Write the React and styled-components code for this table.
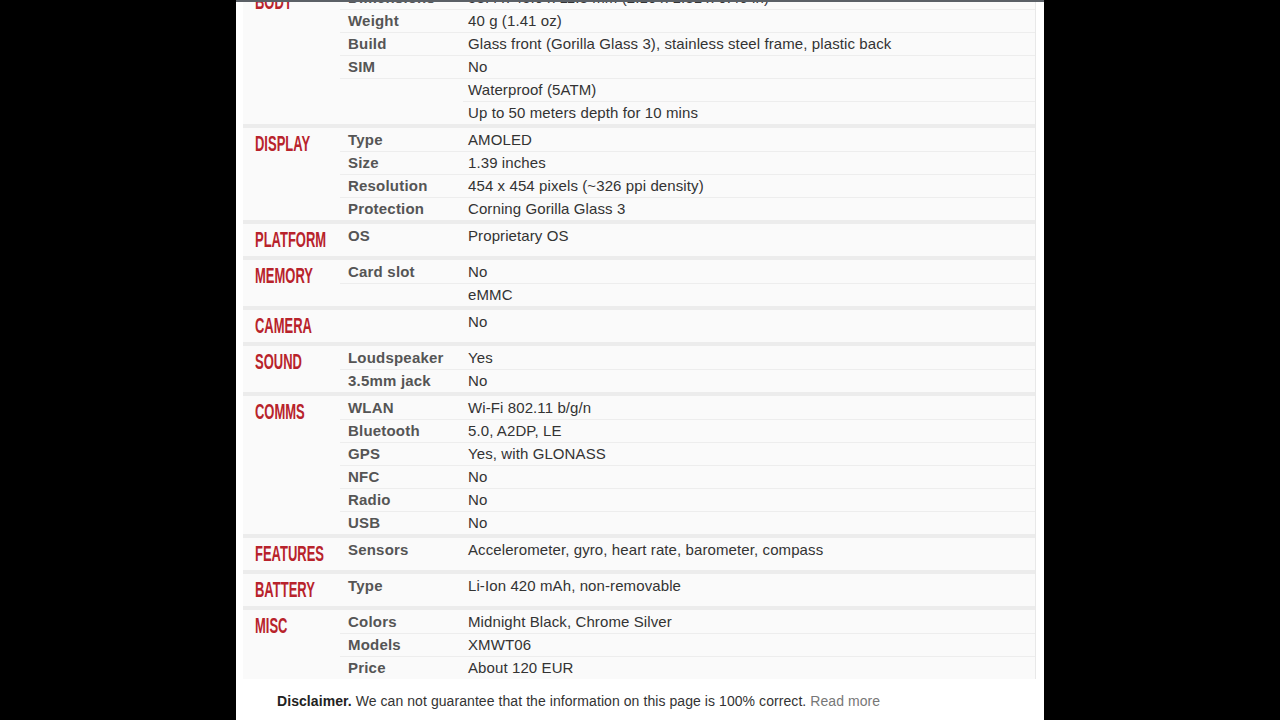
import React from "react";
import styled, { createGlobalStyle } from "styled-components";

const Global = createGlobalStyle`
  html, body {
    margin: 0;
    padding: 0;
    background: #000;
    height: 720px;
    overflow: hidden;
  }
  body {
    font-family: "Liberation Sans", Arial, sans-serif;
  }
`

const PAGE = styled.div`
  width: 808px;
  height: 720px;
  margin: 0 auto;
  background: #fff;
  overflow: hidden;
`
const TOPEDGE = styled.div`
  position: fixed;
  top: 0;
  left: 50%;
  width: 808px;
  margin-left: -404px;
  height: 2px;
  background: #5b6066;
  z-index: 2;
`
const TABLE = styled.div`
  margin: -14px 8px 0 7px;
  background: #fafafa;
  border-right: 1px solid #e8e8e8;
`
const SECTION = styled.div`
  display: flex;
  min-height: 32px;
  border-top: ${p => (p.first ? "none" : "4px solid #ececec")};
`
const HEADER = styled.div`
  width: 97px;
  flex-shrink: 0;
  padding-left: 12px;
  box-sizing: border-box;
  height: 32px;
  line-height: 32px;
  span {
    display: inline-block;
    font-family: "Liberation Sans", Arial, sans-serif;
    font-weight: bold;
    font-size: 22px;
    color: #b8232b;
    transform: scaleX(0.59);
    transform-origin: left center;
    white-space: nowrap;
  }
`
const ROWS = styled.div`
  flex: 1;
`
const ROW = styled.div`
  display: grid;
  grid-template-columns: 123px 1fr;
  height: 23px;
`
const LABEL = styled.div`
  box-sizing: border-box;
  padding-left: 8px;
  line-height: 23px;
  font-size: 15px;
  font-weight: bold;
  letter-spacing: 0.2px;
  color: #555;
  border-bottom: ${p => (p.line ? "1px solid #ededed" : "none")};
`
const VALUE = styled.div`
  box-sizing: border-box;
  padding-left: 5px;
  line-height: 23px;
  font-size: 15px;
  letter-spacing: 0.1px;
  color: #333;
  white-space: nowrap;
  border-bottom: ${p => (p.line ? "1px solid #ededed" : "none")};
`
const DISCLAIMER = styled.div`
  padding: 14px 0 0 41px;
  font-size: 14px;
  letter-spacing: 0.07px;
  color: #333;
  b { color: #222; }
  a { color: #777; text-decoration: none; }
`

const specs = [
  ["BODY", [
    ["Dimensions", "53.4 x 45.9 x 11.8 mm (2.10 x 1.81 x 0.46 in)"],
    ["Weight", "40 g (1.41 oz)"],
    ["Build", "Glass front (Gorilla Glass 3), stainless steel frame, plastic back"],
    ["SIM", "No"],
    ["", "Waterproof (5ATM)"],
    ["", "Up to 50 meters depth for 10 mins"],
  ]],
  ["DISPLAY", [
    ["Type", "AMOLED"],
    ["Size", "1.39 inches"],
    ["Resolution", "454 x 454 pixels (~326 ppi density)"],
    ["Protection", "Corning Gorilla Glass 3"],
  ]],
  ["PLATFORM", [["OS", "Proprietary OS"]]],
  ["MEMORY", [["Card slot", "No"], ["", "eMMC"]]],
  ["CAMERA", [["", "No"]]],
  ["SOUND", [["Loudspeaker", "Yes"], ["3.5mm jack", "No"]]],
  ["COMMS", [
    ["WLAN", "Wi-Fi 802.11 b/g/n"],
    ["Bluetooth", "5.0, A2DP, LE"],
    ["GPS", "Yes, with GLONASS"],
    ["NFC", "No"],
    ["Radio", "No"],
    ["USB", "No"],
  ]],
  ["FEATURES", [["Sensors", "Accelerometer, gyro, heart rate, barometer, compass"]]],
  ["BATTERY", [["Type", "Li-Ion 420 mAh, non-removable"]]],
  ["MISC", [
    ["Colors", "Midnight Black, Chrome Silver"],
    ["Models", "XMWT06"],
    ["Price", "About 120 EUR"],
  ]],
];

function App() {
  return (
    <>
      <Global />
      <TOPEDGE />
      <PAGE>
        <TABLE>
          {specs.map(([name, rows], i) => (
            <SECTION key={name} first={i === 0}>
              <HEADER><span>{name}</span></HEADER>
              <ROWS>
                {rows.map(([label, value], j) => {
                  const more = j < rows.length - 1;
                  return (
                    <ROW key={j}>
                      <LABEL line={more && label !== ""}>{label}</LABEL>
                      <VALUE line={more}>{value}</VALUE>
                    </ROW>
                  );
                })}
              </ROWS>
            </SECTION>
          ))}
        </TABLE>
        <DISCLAIMER>
          <b>Disclaimer.</b> We can not guarantee that the information on this page is 100% correct. <a href="#">Read more</a>
        </DISCLAIMER>
      </PAGE>
    </>
  );
}

export default App;
